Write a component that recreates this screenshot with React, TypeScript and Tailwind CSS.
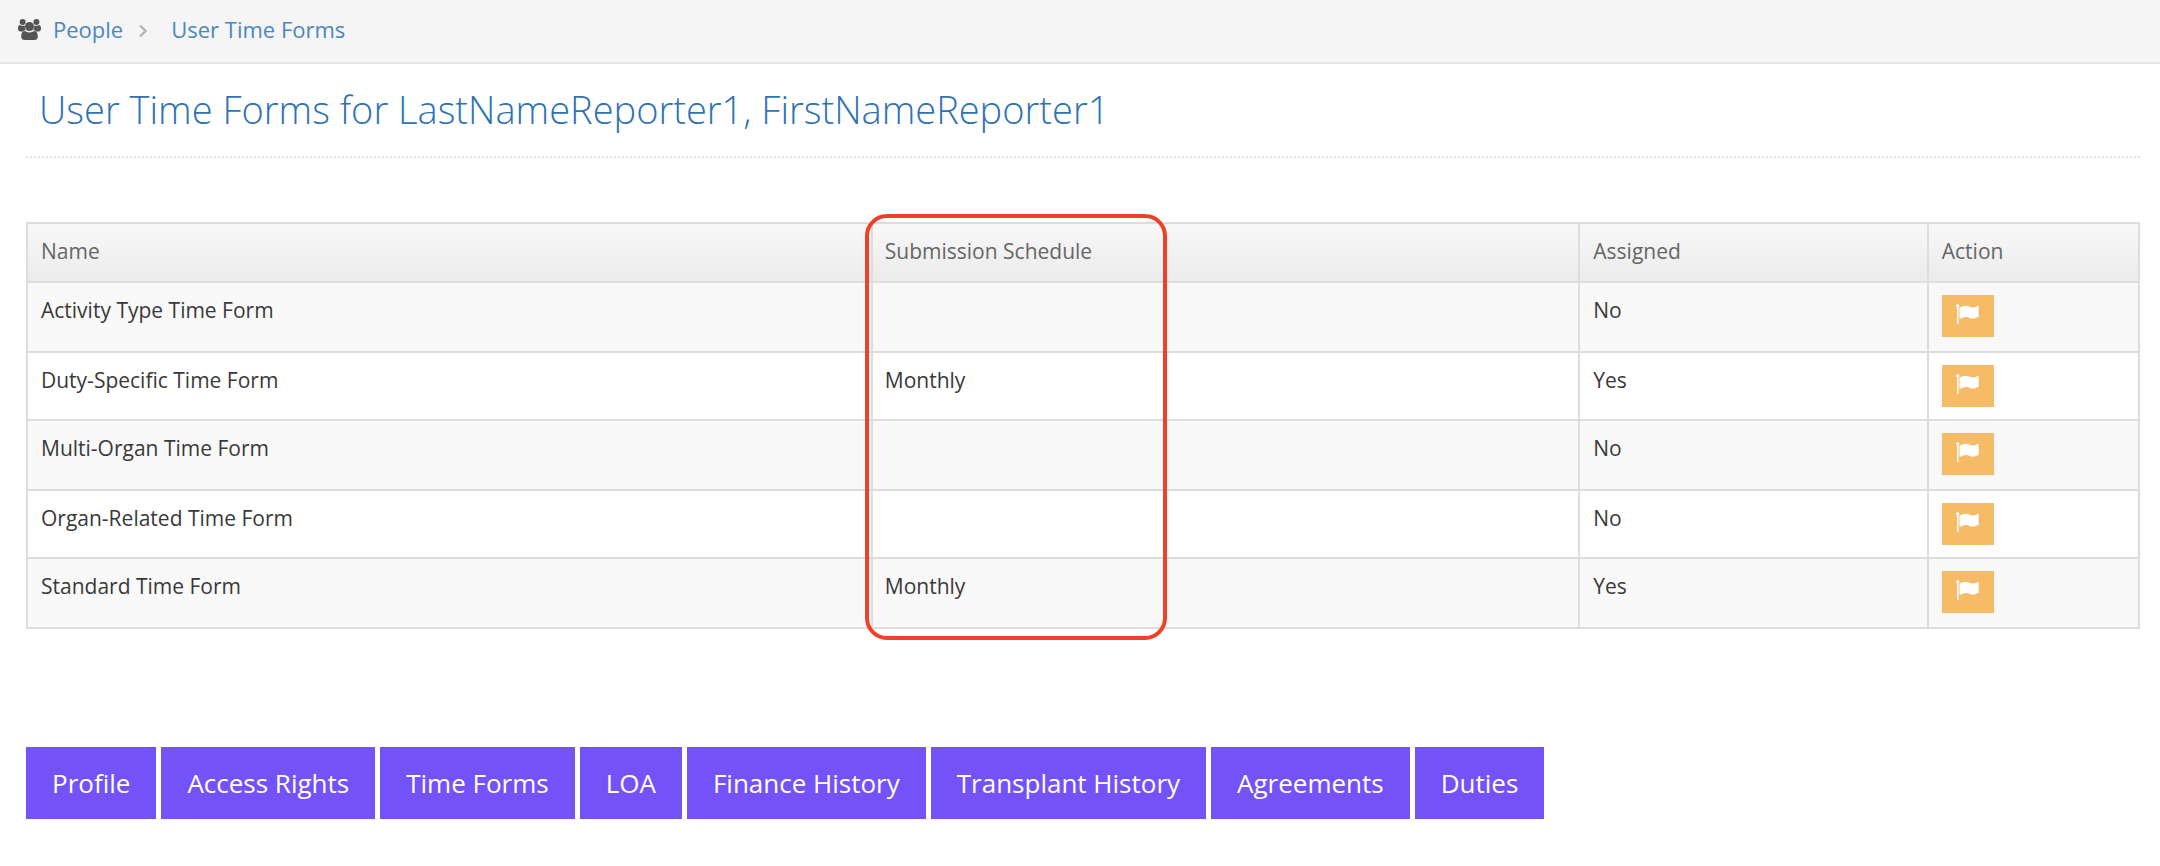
const links = [
  "Profile",
  "Access Rights",
  "Time Forms",
  "LOA",
  "Finance History",
  "Transplant History",
  "Agreements",
  "Duties",
];

const forms = [
  { name: "Activity Type Time Form", schedule: "", assigned: "No" },
  { name: "Duty-Specific Time Form", schedule: "Monthly", assigned: "Yes" },
  { name: "Multi-Organ Time Form", schedule: "", assigned: "No" },
  { name: "Organ-Related Time Form", schedule: "", assigned: "No" },
  { name: "Standard Time Form", schedule: "Monthly", assigned: "Yes" },
];

const GroupIcon = () => (
  <svg viewBox="0 0 23 21" className="w-[23px] h-[21px]" fill="#555" aria-hidden="true">
    <circle cx="4.6" cy="3" r="3" />
    <circle cx="18.4" cy="3" r="3" />
    <path d="M0 9.5C0 7.300 .6 5.900 1.800 5.900c.8 0 1.400.9 2.900.9.9 0 1.500-.2 2.100-.4C6.600 8.300 7 9.800 8 11.200c-1.500 0-2.500.5-3.300 1.300H2.400C.9 12.500 0 11.400 0 9.500z" />
    <path d="M23 9.500c0-2.200-.6-3.600-1.800-3.600-.8 0-1.400.9-2.900.9-.9 0-1.500-.2-2.100-.4.200 1.900-.2 3.400-1.200 4.800 1.500 0 2.500.5 3.300 1.300h2.300c1.500 0 2.400-1.100 2.400-3z" />
    <circle cx="11.500" cy="7.500" r="4.500" />
    <path d="M3.200 17.800c0-3 .8-5.800 3.500-5.800.9 0 2 1.500 4.800 1.500s3.900-1.500 4.800-1.500c2.700 0 3.500 2.800 3.500 5.800 0 2-1.300 3.200-3.200 3.200H6.400c-1.900 0-3.200-1.200-3.200-3.200z" />
  </svg>
);

const FlagIcon = () => (
  <svg viewBox="0 0 23 20" className="w-[23px] h-5" fill="white" aria-hidden="true">
    <circle cx="1.700" cy="1.700" r="1.700" />
    <path d="M1 2h1.500v17.500a.5.500 0 0 1-.5.500h-.5a.5.500 0 0 1-.5-.5z" />
    <path d="M3.500 3.800C5.500 2.600 7.500 1.700 9.800 1.700c3 0 4.700 1.900 7 1.900 1.700 0 3.300-.9 4.700-1.700.7-.4 1.200-.1 1.200.6v9.700c0 .5-.3.700-.7.900-1.500.8-3.100 1.600-4.900 1.600-2.600 0-4.200-1.800-7-1.800-2 0-3.900.9-5.700 1.900-.5.300-.9.100-.9-.5z" />
  </svg>
);

const App = () => {
  return (
    <div className="min-h-screen bg-white font-['Open_Sans',sans-serif] text-[#393939]">
      <nav className="flex h-16 items-center border-b-2 border-[#e5e5e5] bg-[#f5f5f5] pl-[18px] pb-1 text-[22px] text-[#4c87bc]">
        <GroupIcon />
        <a href="#people" className="ml-3">
          People
        </a>
        <svg viewBox="0 0 8 12" className="mx-4 mt-1 h-3 w-2" fill="none" stroke="#b2b6bf" strokeWidth="2.4" aria-hidden="true">
          <path d="M1 0.500L6.500 6L1 11.500" />
        </svg>
        <a href="#forms" className="ml-2">
          User Time Forms
        </a>
      </nav>

      <main className="pl-[26px] pr-5">
        <h1 className="border-b-2 border-dotted border-[#e2e2e2] px-[13px] pt-5 pb-[21px] text-[38px] leading-[51px] font-light text-[#2f72b2]">
          User Time Forms for LastNameReporter1, FirstNameReporter1
        </h1>

        <table className="mt-16 w-full table-fixed border-collapse text-left align-top text-[21px] leading-7 [&_td]:border-2 [&_td]:border-[#ddd] [&_th]:border-2 [&_th]:border-[#ddd]">
          <thead>
            <tr className="h-[59px] bg-linear-to-b from-[#f8f8f8] to-[#ebebeb] text-[#666]">
              <th className="w-[40%] px-[13px] pb-[3px] font-normal">Name</th>
              <th className="relative w-[33.500%] px-3 pb-[3px] font-normal">
                Submission Schedule
                <div className="pointer-events-none absolute -top-[10px] -left-[8px] h-[426px] w-[302px] rounded-[22px] border-4 border-[#ee4128]" />
              </th>
              <th className="w-[16.500%] px-[13px] pb-[3px] font-normal">Assigned</th>
              <th className="w-[10%] px-[13px] pb-[3px] font-normal">Action</th>
            </tr>
          </thead>
          <tbody>
            {forms.map((form) => (
              <tr key={form.name} className="h-[68px] align-top odd:h-[70px] odd:bg-[#f9f9f9]">
                <td className="px-[13px] pt-[13px]">{form.name}</td>
                <td className="px-3 pt-[13px]">{form.schedule}</td>
                <td className="px-[13px] pt-[13px]">{form.assigned}</td>
                <td className="px-[13px] pt-3">
                  <button aria-label="Flag" className="flex h-[42px] w-[52px] justify-center bg-[#f5bb67] pt-[9px]">
                    <FlagIcon />
                  </button>
                </td>
              </tr>
            ))}
          </tbody>
        </table>

        <div className="mt-[118px] flex flex-wrap gap-[5px]">
          {links.map((link) => (
            <button key={link} className="h-[72px] bg-[#7352f7] px-[26px] text-[26px] text-white">
              {link}
            </button>
          ))}
        </div>
      </main>
    </div>
  );
};

export default App;
